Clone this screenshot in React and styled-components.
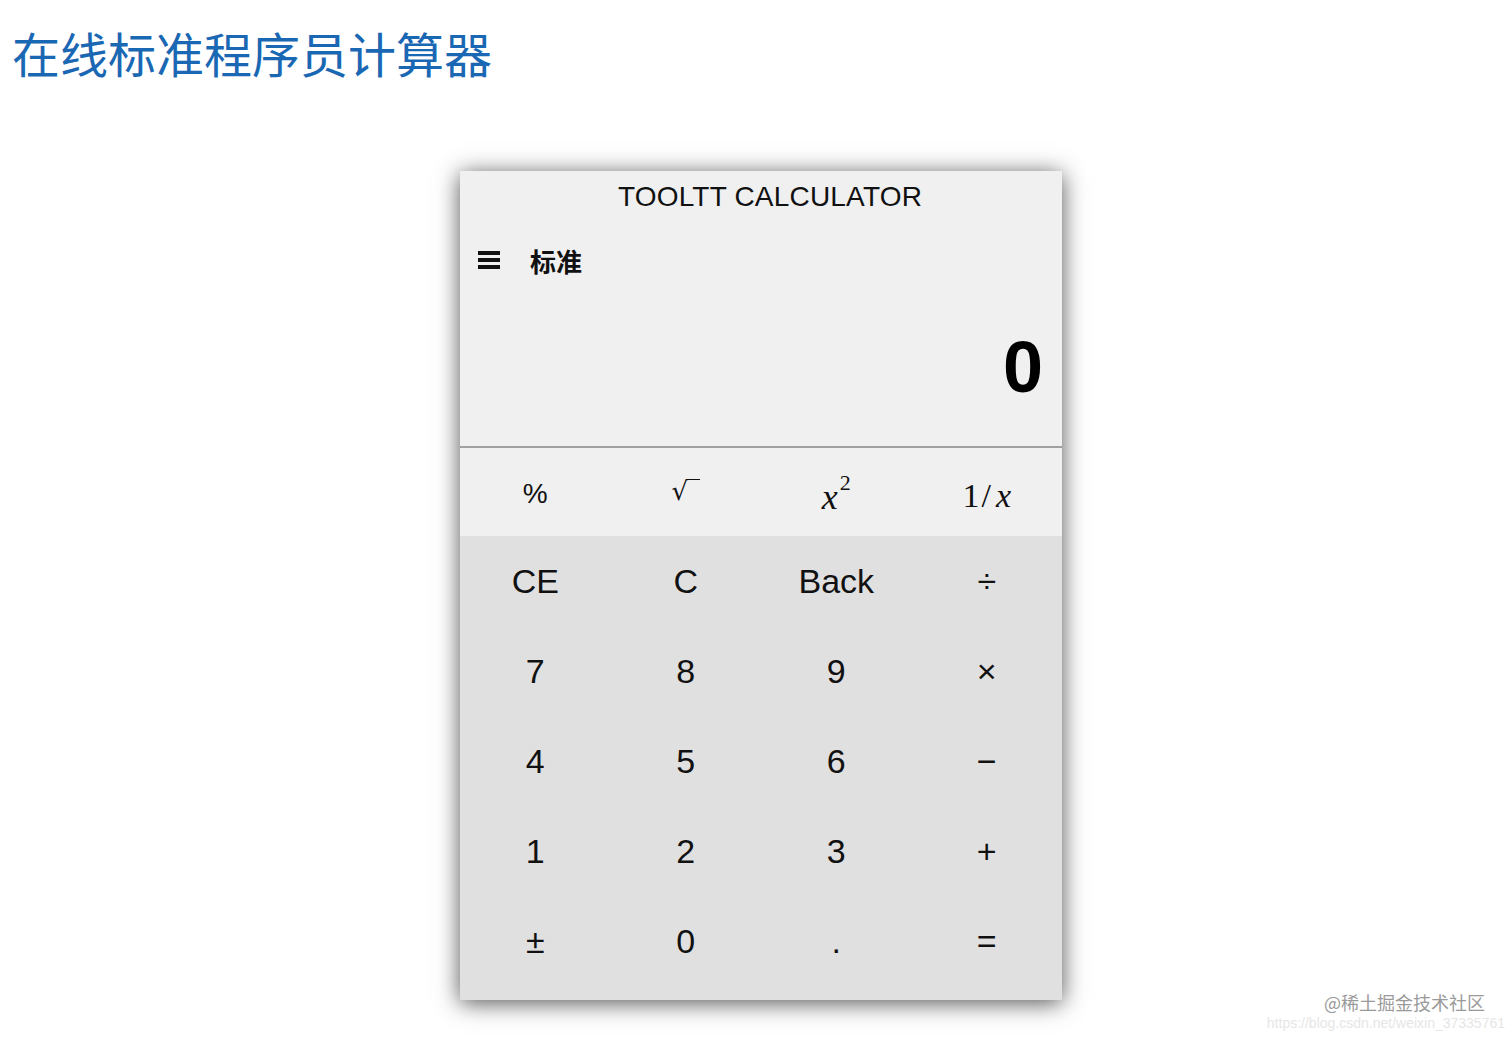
import styled, { createGlobalStyle } from 'styled-components';

const GlobalStyle = createGlobalStyle`
  html, body {
    margin: 0;
    padding: 0;
    background: #ffffff;
  }
  body {
    font-family: "Liberation Sans", "Noto Sans CJK SC", sans-serif;
  }
`;

const Page = styled.div`
  position: relative;
  width: 1512px;
  height: 1040px;
  overflow: hidden;
`;

const Title = styled.h1`
  margin: 0;
  padding: 23px 0 0 12px;
  height: 58px;
  line-height: 58px;
  font-family: "Noto Sans CJK SC", sans-serif;
  font-size: 48px;
  font-weight: 400;
  color: #1a67b3;
`;

const Calculator = styled.div`
  margin: 90px 0 0 460px;
  width: 602px;
  background: #f0f0f0;
  box-shadow: 0 3px 22px rgba(0, 0, 0, 0.68);
`;

const Brand = styled.div`
  height: 52px;
  line-height: 52px;
  padding-left: 18px;
  text-align: center;
  font-size: 28px;
  letter-spacing: 0.2px;
  color: #111;
`;

const ModeRow = styled.div`
  display: flex;
  align-items: center;
  gap: 30px;
  height: 74px;
  padding: 0 0 2px 18px;
`;

const Mode = styled.span`
  font-family: "Noto Sans CJK SC", sans-serif;
  font-size: 26px;
  font-weight: 700;
  color: #111;
`;

const Display = styled.div`
  display: flex;
  align-items: flex-end;
  justify-content: flex-end;
  height: 104px;
  padding: 0 19px 43px 0;
  border-bottom: 2px solid #a0a0a0;
`;

const Value = styled.span`
  font-size: 72px;
  line-height: 72px;
  font-weight: 700;
  color: #000;
`;

const FunctionRow = styled.div`
  display: grid;
  grid-template-columns: repeat(4, 1fr);
  height: 88px;
  background: #f0f0f0;
`;

const FuncKey = styled.button`
  border: none;
  background: transparent;
  padding: ${p => p.$drop || 0}px 0 0 0;
  display: flex;
  align-items: center;
  justify-content: center;
  color: #111;
  font-family: ${p => (p.$serif ? '"Liberation Serif", serif' : '"Liberation Sans", sans-serif')};
  font-size: ${p => p.$size || 28}px;
  font-style: ${p => (p.$italic ? 'italic' : 'normal')};
`;

const Root = styled.span`
  display: inline-flex;
  align-items: flex-start;
  font-family: "DejaVu Serif", "Liberation Serif", serif;
  font-size: 26px;
  font-weight: 300;
  line-height: 1;
  margin-top: -2px;
`;

const RootBar = styled.span`
  width: 13px;
  margin-top: 1px;
  margin-left: -1px;
  border-top: 1.5px solid #111;
`;

const Sup = styled.sup`
  font-size: 22px;
  font-style: normal;
  vertical-align: 0;
  position: relative;
  top: -14px;
  margin-left: 2px;
`;

const Slash = styled.span`
  font-style: normal;
  margin: 0 5px 0 2px;
`;

const Keypad = styled.div`
  display: grid;
  grid-template-columns: repeat(4, 1fr);
  grid-auto-rows: 90px;
  padding-bottom: 14px;
  background: #e0e0e0;
`;

const Key = styled.button`
  border: none;
  background: transparent;
  padding: 0;
  display: flex;
  align-items: center;
  justify-content: center;
  font-family: "Liberation Sans", sans-serif;
  font-size: 34px;
  color: #111;
`;

const Watermark = styled.div`
  position: absolute;
  right: 27px;
  top: 989px;
  font-family: "Noto Sans CJK SC", sans-serif;
  font-size: 18px;
  color: #9a9a9a;
`;

const SourceUrl = styled.div`
  position: absolute;
  right: 7px;
  top: 1015px;
  font-family: "Liberation Sans", sans-serif;
  font-size: 14px;
  color: #e6e6e6;
`;

const Menu = () => (
  <svg width="22" height="18" viewBox="0 0 22 18">
    <rect x="0" y="0" width="22" height="4" fill="#111" />
    <rect x="0" y="7" width="22" height="4" fill="#111" />
    <rect x="0" y="14" width="22" height="4" fill="#111" />
  </svg>
);

const keys = [
  'CE', 'C', 'Back', '÷',
  '7', '8', '9', '×',
  '4', '5', '6', '−',
  '1', '2', '3', '+',
  '±', '0', '.', '=',
];

export default function App() {
  return (
    <Page>
      <GlobalStyle />
      <Title>在线标准程序员计算器</Title>
      <Calculator>
        <Brand>TOOLTT CALCULATOR</Brand>
        <ModeRow>
          <Menu />
          <Mode>标准</Mode>
        </ModeRow>
        <Display>
          <Value>0</Value>
        </Display>
        <FunctionRow>
          <FuncKey $drop={4}>%</FuncKey>
          <FuncKey>
            <Root>√<RootBar /></Root>
          </FuncKey>
          <FuncKey $serif $italic $size={36} $drop={10}>
            x<Sup>2</Sup>
          </FuncKey>
          <FuncKey $serif $size={34} $drop={8}>
            1<Slash>/</Slash><i>x</i>
          </FuncKey>
        </FunctionRow>
        <Keypad>
          {keys.map(k => (
            <Key key={k}>{k}</Key>
          ))}
        </Keypad>
      </Calculator>
      <Watermark>@稀土掘金技术社区</Watermark>
      <SourceUrl>https://blog.csdn.net/weixin_37335761</SourceUrl>
    </Page>
  );
}
